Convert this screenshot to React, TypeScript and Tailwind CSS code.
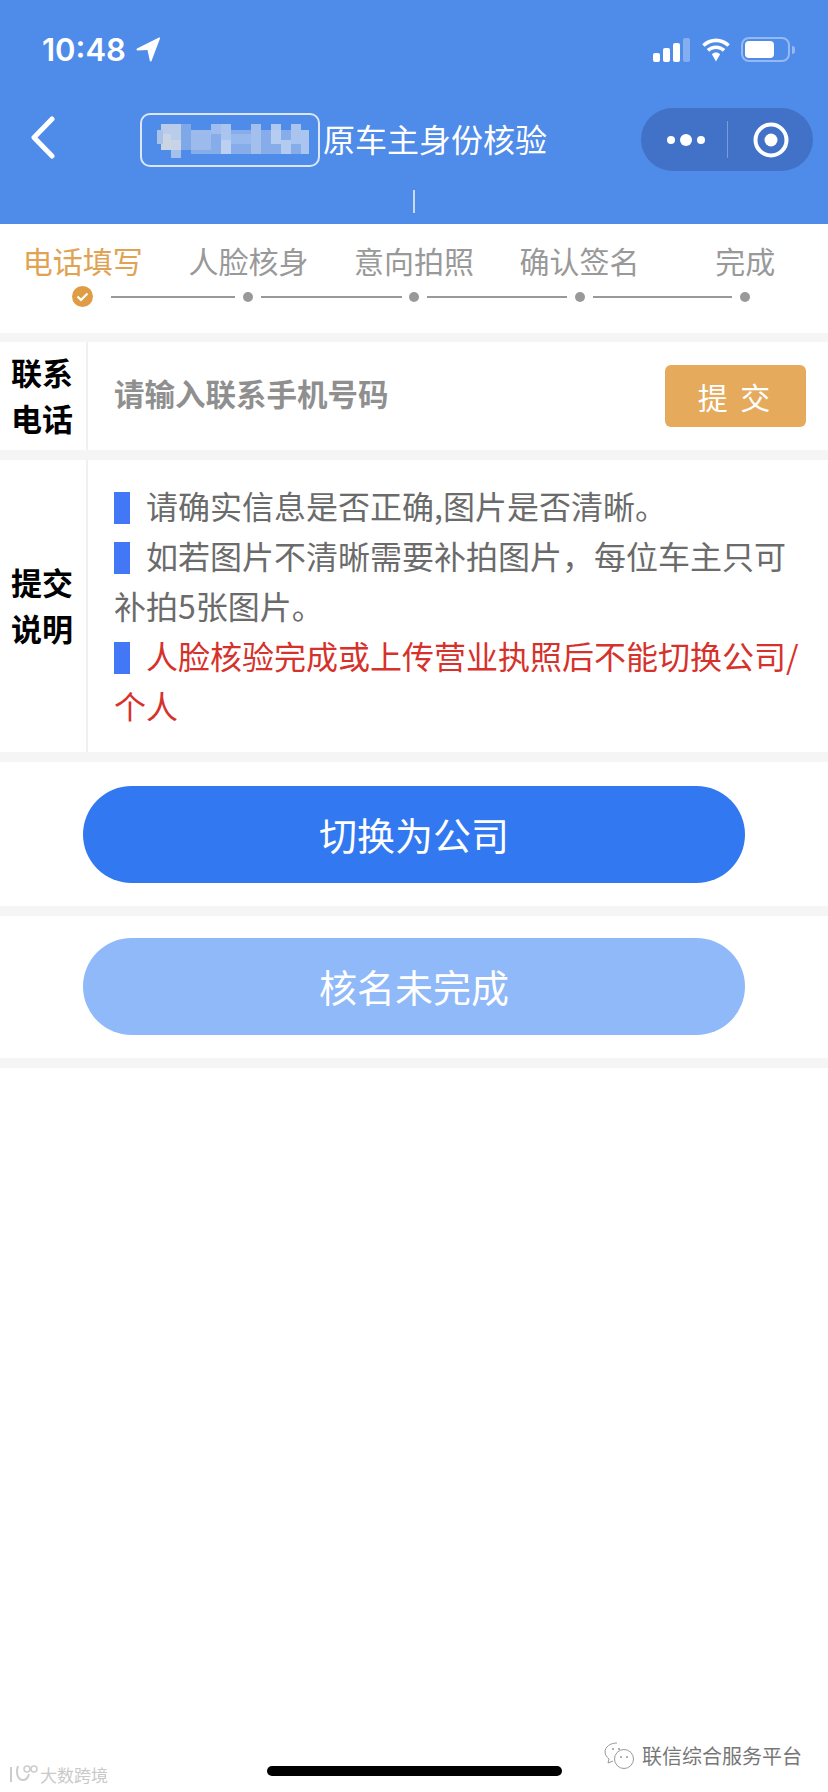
import React from 'react';

const cjk = { fontFamily: '"Noto Sans CJK SC", "Noto Sans", sans-serif' };

const steps = ['电话填写', '人脸核身', '意向拍照', '确认签名', '完成'];

// mosaic cells that hide the company name in the title
const mosaic: [number, number, number, number, string][] = [
  [160, 124, 20, 26, '#b9cdea'],
  [160, 134, 10, 16, '#c9d5e2'],
  [170, 140, 10, 10, '#c6d4e6'],
  [156, 130, 6, 14, '#a8c2ea'],
  [170, 150, 10, 8, '#a5c0ea'],
  [180, 124, 10, 26, '#7fa8e9'],
  [190, 130, 118, 24, '#86ade9'],
  [190, 130, 20, 20, '#9cbbec'],
  [210, 124, 10, 10, '#9fbdee'],
  [220, 124, 10, 16, '#a9c5f0'],
  [220, 140, 10, 14, '#bcd1f2'],
  [230, 134, 20, 10, '#98b9ed'],
  [250, 124, 10, 30, '#a2bfee'],
  [270, 124, 10, 10, '#aec8f0'],
  [270, 130, 10, 14, '#b6cdf2'],
  [280, 140, 10, 14, '#b4cbf0'],
  [290, 124, 10, 20, '#a9c4ef'],
  [300, 130, 8, 24, '#aac5f0'],
];

const StatusBar = () => (
  <div className="flex h-[100px] items-start justify-between pl-[42px] pr-[33px] pt-[30px] text-white">
    <div className="flex items-center gap-[10px]">
      <span className="text-[31px] leading-[40px] font-semibold" style={{ fontFamily: 'Inter, sans-serif' }}>
        10:48
      </span>
      <svg width="25" height="26" viewBox="0 0 25 26">
        <path d="M1 11.500 23 .6c.7-.3 1.300.3 1 1L15.500 24c-.4.9-1.500.8-1.700-.2L11.500 13 1.500 13.500c-1 0-1.300-1.500-.5-2Z" fill="#fff" />
      </svg>
    </div>
    <div className="flex items-center pt-[7px]">
      <svg width="37" height="24" viewBox="0 0 37 24">
        <rect x="0" y="15" width="7" height="9" rx="2" fill="#fff" />
        <rect x="10" y="10" width="7" height="14" rx="2" fill="#fff" />
        <rect x="20" y="5" width="7" height="19" rx="2" fill="#fff" />
        <rect x="30" y="0" width="7" height="24" rx="2" fill="#fff" fillOpacity="0.3" />
      </svg>
      <svg className="ml-[10px]" width="32" height="24" viewBox="0 0 32 24">
        <path d="M16 4.200c4.400 0 8.400 1.700 11.400 4.600l2.400-2.600C26.200 2.700 21.300.6 16 .6S5.800 2.700 2.200 6.200l2.400 2.600C7.600 5.900 11.600 4.200 16 4.200Z" fill="#fff" />
        <path d="M16 11c2.600 0 5 1 6.800 2.700l2.500-2.600C22.800 8.800 19.600 7.400 16 7.400S9.200 8.800 6.700 11.100l2.500 2.600C11 12 13.400 11 16 11Z" fill="#fff" />
        <path d="M16 14.600c-1.600 0-3 .6-4.100 1.600L16 23.600l4.100-7.400c-1.100-1-2.500-1.600-4.100-1.600Z" fill="#fff" />
      </svg>
      <div className="ml-[9px] flex items-center gap-[2px]">
        <div className="flex h-[25px] w-[49px] items-center rounded-[8px] border-2 border-white/40 p-[2px]">
          <div className="h-[17px] w-[29px] rounded-[4px] bg-white" />
        </div>
        <div className="h-[8px] w-[3px] rounded-r-full bg-white/40" />
      </div>
    </div>
  </div>
);

const NavBar = () => (
  <div className="relative flex h-[124px] items-start">
    <svg className="ml-[29px] mt-[16px]" width="28" height="44" viewBox="0 0 28 44">
      <path d="M23 3 5 21.500 23 40" fill="none" stroke="#fff" strokeWidth="5" strokeLinecap="round" strokeLinejoin="round" />
    </svg>
    <div className="ml-[83px] mt-[13px] h-[54px] w-[180px] rounded-[10px] border-2 border-[#dbe7f8]">
      <svg width="176" height="50" viewBox="141 115 176 50">
        {mosaic.map(([x, y, w, h, c], i) => (
          <rect key={i} x={x} y={y} width={w} height={h} fill={c} />
        ))}
      </svg>
    </div>
    <span className="ml-[3px] mt-[16px] text-[32px] leading-[44px] text-white" style={cjk}>
      原车主身份核验
    </span>
    <div className="absolute right-[15px] top-[8px] flex h-[63px] w-[172px] items-center rounded-full bg-[#4272c8]">
      <div className="flex w-[86px] items-center justify-center gap-[5px] pl-[3px]">
        <div className="h-[8px] w-[8px] rounded-full bg-white" />
        <div className="h-[12px] w-[12px] rounded-full bg-white" />
        <div className="h-[8px] w-[8px] rounded-full bg-white" />
      </div>
      <div className="h-[37px] w-px bg-white/30" />
      <div className="flex flex-1 items-center justify-center">
        <svg width="36" height="36" viewBox="0 0 36 36">
          <circle cx="18" cy="18" r="15.500" fill="none" stroke="#fff" strokeWidth="4" />
          <circle cx="18" cy="18" r="6.500" fill="#fff" />
        </svg>
      </div>
    </div>
    <div className="absolute left-[413px] top-[90px] h-[23px] w-[2px] bg-[#c9daf5]" />
  </div>
);

const Steps = () => (
  <div className="h-[109px] bg-white">
    <div className="grid grid-cols-5 pt-[16px]">
      {steps.map((s, i) => (
        <div
          key={s}
          className={`text-center text-[30px] leading-[40px] ${i === 0 ? 'text-[#e0a354]' : 'text-[#999999]'}`}
          style={cjk}
        >
          {s}
        </div>
      ))}
    </div>
    <div className="mt-[6px] flex items-center pl-[72px]">
      <svg width="21" height="21" viewBox="0 0 21 21">
        <circle cx="10.500" cy="10.500" r="10.500" fill="#e09c44" />
        <path d="M5.500 10.500 9 14l6.500-6.500" fill="none" stroke="#fff" strokeWidth="2.200" />
      </svg>
      <div className="ml-[18px] h-[2px] w-[124px] bg-[#999999]" />
      <div className="ml-[8px] h-[10px] w-[10px] rounded-full bg-[#999999]" />
      <div className="ml-[8px] h-[2px] w-[141px] bg-[#999999]" />
      <div className="ml-[7px] h-[10px] w-[10px] rounded-full bg-[#999999]" />
      <div className="ml-[8px] h-[2px] w-[140px] bg-[#999999]" />
      <div className="ml-[8px] h-[10px] w-[10px] rounded-full bg-[#999999]" />
      <div className="ml-[8px] h-[2px] w-[139px] bg-[#999999]" />
      <div className="ml-[8px] h-[10px] w-[10px] rounded-full bg-[#999999]" />
    </div>
  </div>
);

const Band = () => <div className="h-[9px] bg-[#f5f5f5]" />;

const Label = ({ a, b }: { a: string; b: string }) => (
  <div className="flex w-[88px] shrink-0 flex-col items-center justify-center border-r-2 border-[#f0f0f0] pb-[2px] pr-[2px] text-[31px] leading-[46px] font-bold text-black">
    <span>{a}</span>
    <span>{b}</span>
  </div>
);

const Bar = () => <span className="mr-[16px] inline-block h-[32px] w-[16px] bg-[#4277f6] align-[-5px]" />;

const App = () => {
  return (
    <div className="relative h-[1792px] w-[828px] overflow-hidden bg-white" style={cjk}>
      <div className="h-[224px] bg-[#4f8be8]">
        <StatusBar />
        <NavBar />
      </div>
      <Steps />
      <Band />

      <div className="flex h-[108px]">
        <Label a="联系" b="电话" />
        <div className="flex flex-1 items-center justify-between pl-[26px] pr-[22px]">
          <span className="pb-[4px] text-[30.500px] font-bold text-[#8f8f8f]">请输入联系手机号码</span>
          <div className="flex h-[62px] w-[141px] items-center justify-center rounded-[6px] bg-[#e5aa5c] text-[30px] tracking-[3px] whitespace-pre text-white">
            提 交
          </div>
        </div>
      </div>
      <div className="h-[10px] bg-[#f5f5f5]" />

      <div className="flex h-[292px]">
        <Label a="提交" b="说明" />
        <div className="flex-1 pl-[26px] pr-[16px] pt-[20px] text-[32px] leading-[50px] text-[#6b6b6b]">
          <p>
            <Bar />
            请确实信息是否正确,图片是否清晰。
          </p>
          <p>
            <Bar />
            如若图片不清晰需要补拍图片，每位车主只可补拍5张图片。
          </p>
          <p className="text-[#d6322c]">
            <Bar />
            人脸核验完成或上传营业执照后不能切换公司/个人
          </p>
        </div>
      </div>
      <div className="h-[10px] bg-[#f5f5f5]" />

      <div className="h-[144px] px-[83px] pt-[24px]">
        <div className="flex h-[97px] items-center justify-center rounded-full bg-[#3278f0] pb-[2px] text-[38px] text-white">
          切换为公司
        </div>
      </div>
      <div className="h-[10px] bg-[#f5f5f5]" />

      <div className="h-[142px] px-[83px] pt-[22px]">
        <div className="flex h-[97px] items-center justify-center rounded-full bg-[#8fb9f8] pb-[2px] text-[38px] text-white">
          核名未完成
        </div>
      </div>
      <div className="h-[10px] bg-[#f5f5f5]" />

      {/* watermarks + home indicator sit over the page */}
      <div className="absolute bottom-[6px] left-[8px] flex items-center gap-[2px] text-[17px] leading-[22px] text-[#c9c9c9]">
        <svg width="30" height="22" viewBox="0 0 30 22">
          <path d="M3 3v15M10 2c-2 6-1 14 5 14 4 0 5-3 6-6" fill="none" stroke="#cccccc" strokeWidth="2" />
          <circle cx="19" cy="5" r="3" fill="none" stroke="#cccccc" strokeWidth="1.500" />
          <circle cx="26" cy="5" r="3" fill="none" stroke="#cccccc" strokeWidth="1.500" />
        </svg>
        <span>大数跨境</span>
      </div>
      <div className="absolute bottom-[16px] left-[267px] h-[10px] w-[295px] rounded-full bg-black" />
      <div className="absolute bottom-[22px] right-[26px] flex items-center gap-[6px] text-[20px] leading-[24px] text-[#777777]">
        <svg width="32" height="28" viewBox="0 0 32 28">
          <path d="M13 1C6 1 1 5 1 10c0 3 2 5 4 7l-1 4 5-2" fill="none" stroke="#999999" strokeWidth="1" />
          <circle cx="20" cy="17" r="9.500" fill="none" stroke="#999999" strokeWidth="1" />
          <circle cx="17" cy="15" r="1" fill="#999999" />
          <circle cx="23" cy="15" r="1" fill="#999999" />
          <circle cx="9" cy="7" r="1" fill="#999999" />
          <circle cx="15" cy="7" r="1" fill="#999999" />
        </svg>
        <span>联信综合服务平台</span>
      </div>
    </div>
  );
};

export default App;
